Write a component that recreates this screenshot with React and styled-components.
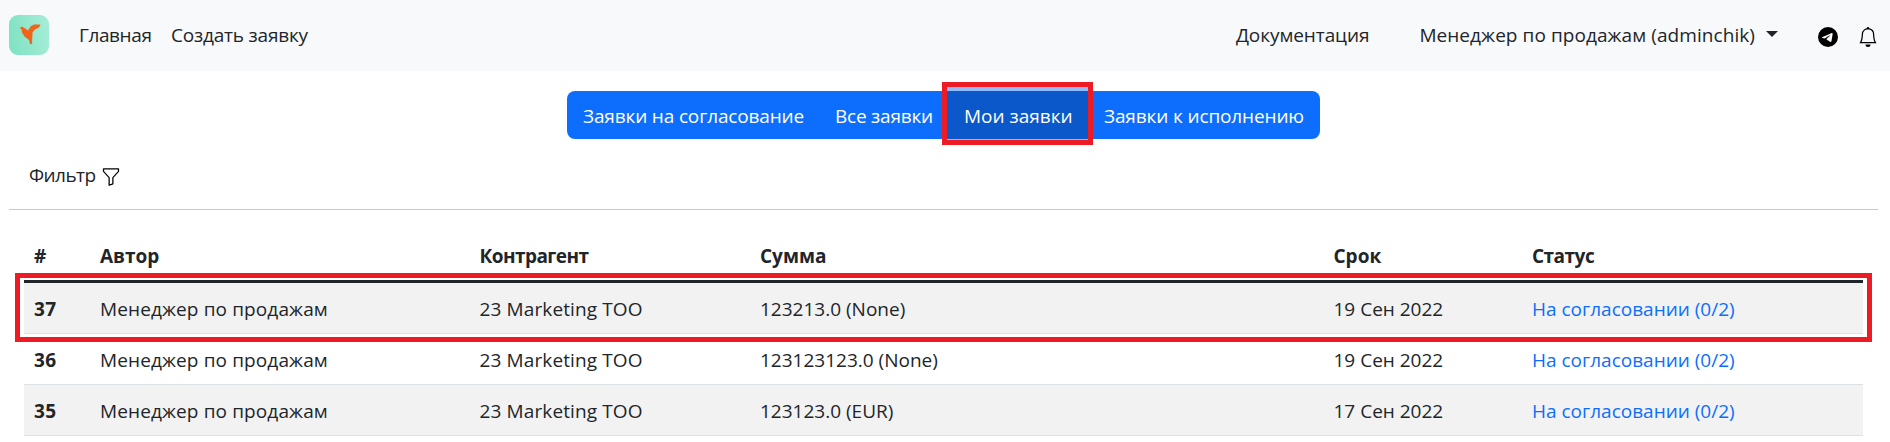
import React from 'react';
import styled, { createGlobalStyle } from 'styled-components';
import { BsBell, BsFunnel, BsTelegram } from 'react-icons/bs';

const GlobalStyle = createGlobalStyle`
  *, *::before, *::after { box-sizing: border-box; }
  body {
    margin: 0;
    background: #fff;
    color: #212529;
    font: 400 19px/30px "Segoe UI", "Open Sans", "Noto Sans", sans-serif;
    overflow: hidden;
  }
`;

const Label = styled.span`
  white-space: nowrap;
  letter-spacing: ${(p) => p.$track || 0}px;
`;

const Navbar = styled.header`
  display: flex;
  align-items: center;
  height: 71px;
  padding: 0 12px 0 9px;
  background: #f8f9fb;
`;

const Logo = styled.svg`
  width: 40px;
  height: 40px;
  margin: 0 30px 2px 0;
`;

const NavLink = styled.a`
  display: flex;
  align-items: center;
  padding-bottom: 2px;
  white-space: nowrap;
  color: #212529;
  margin-right: ${(p) => p.$gap}px;
`;

const Spacer = styled.div`
  flex: 1;
`;

const Caret = styled.span`
  margin: 0 0 1px 11px;
  border: 6px solid transparent;
  border-top-color: #212529;
  border-bottom: 0;
`;

const NavIcon = styled.span`
  display: flex;
  color: #000;
  font-size: 20px;
  margin: 3px 0 0 ${(p) => p.$gap || 0}px;
`;

const Tabs = styled.nav`
  display: flex;
  width: 753px;
  height: 48px;
  margin: 20px 0 0 567px;
`;

const Tab = styled.button`
  position: relative;
  width: ${(p) => p.$width}px;
  padding: 2px 0 0 ${(p) => (p.$active ? 17 : 16)}px;
  border: 0;
  text-align: left;
  font: inherit;
  color: #fff;
  background: ${(p) => (p.$active ? '#0a58ca' : '#0d6efd')};
  box-shadow: ${(p) => (p.$active ? '0 0 0 4px #93bbfa' : 'none')};
  z-index: ${(p) => (p.$active ? 1 : 0)};
  &:first-child { border-radius: 8px 0 0 8px; }
  &:last-child { border-radius: 0 8px 8px 0; }
`;

const TabFrame = styled.span`
  position: absolute;
  inset: -9px -5px -6px -5px;
  border: 5px solid #ed1c24;
`;

const Filter = styled.div`
  display: flex;
  align-items: center;
  height: 30px;
  margin: 21px 0 0 29px;
`;

const FilterIcon = styled(BsFunnel)`
  width: 20px;
  height: 20px;
  margin: 3px 0 0 5px;
  color: #000;
`;

const Divider = styled.hr`
  height: 1px;
  margin: 19px 12px 0 9px;
  border: 0;
  background: #c8c9ca;
`;

const Table = styled.section`
  margin: 30px 27px 0 24px;
`;

const Row = styled.div`
  position: relative;
  display: grid;
  grid-template-columns: 66px 379.5px 280.5px 573.5px 198.5px 1fr;
  align-items: center;
  height: 51px;
  padding-top: 1px;
  background: ${(p) => (p.$striped ? '#f2f2f2' : '#fff')};
  border-bottom: 1px solid #dee2e6;
`;

const HeadRow = styled(Row)`
  height: 43px;
  padding: 0 0 9px;
  border-bottom: 3px solid #212529;
  font-weight: 700;
`;

const Cell = styled.div`
  padding-left: 10px;
  white-space: nowrap;
  font-weight: ${(p) => (p.$bold ? 700 : 'inherit')};
`;

const StatusLink = styled.a`
  color: #0d6efd;
`;

const RowFrame = styled.div`
  position: absolute;
  inset: -10px -9px -9px -9px;
  border: 5px solid #ed1c24;
  z-index: 1;
`;

const tabs = [
  { text: 'Заявки на согласование', width: 252, track: -0.15 },
  { text: 'Все заявки', width: 128, track: -0.22 },
  { text: 'Мои заявки', width: 141, track: 0, active: true },
  { text: 'Заявки к исполнению', width: 232, track: -0.13 },
];

const columns = [
  { text: '#' },
  { text: 'Автор' },
  { text: 'Контрагент', track: -0.55 },
  { text: 'Сумма' },
  { text: 'Срок' },
  { text: 'Статус', track: -0.5 },
];

const requests = [
  { id: 37, sum: '123213.0 (None)', due: '19 Сен 2022', marked: true },
  { id: 36, sum: '123123123.0 (None)', due: '19 Сен 2022' },
  { id: 35, sum: '123123.0 (EUR)', due: '17 Сен 2022' },
];

function BirdLogo() {
  return (
    <Logo viewBox="0 0 40 40">
      <defs>
        <linearGradient id="mint" x1="0" x2="1" y1="0.2" y2="0">
          <stop offset="0" stopColor="#82e3c4" />
          <stop offset="1" stopColor="#a8edd8" />
        </linearGradient>
      </defs>
      <rect width="40" height="40" rx="9" fill="url(#mint)" />
      <path
        fill="#f26419"
        d="M10.5 13.2 L13 11.5 L15.5 13 L19 15.5 L21.5 11.5 L25 9.5 L31.5 9.5 L30 12.5 L26 14.5 L23.5 17.5 L23 29 L21 29 L20 25 L15.5 21.5 L13 17.5 L12.5 14 Z"
      />
    </Logo>
  );
}

export default function App() {
  return (
    <>
      <GlobalStyle />
      <Navbar>
        <BirdLogo />
        <NavLink $gap={19.5}><Label $track={-0.4}>Главная</Label></NavLink>
        <NavLink><Label $track={-0.2}>Создать заявку</Label></NavLink>
        <Spacer />
        <NavLink $gap={50}><Label $track={-0.08}>Документация</Label></NavLink>
        <NavLink $gap={40}>
          <Label $track={0.07}>Менеджер по продажам (adminchik)</Label>
          <Caret />
        </NavLink>
        <NavIcon><BsTelegram /></NavIcon>
        <NavIcon $gap={20}><BsBell /></NavIcon>
      </Navbar>
      <Tabs>
        {tabs.map((t) => (
          <Tab key={t.text} $width={t.width} $active={t.active}>
            <Label $track={t.track}>{t.text}</Label>
            {t.active && <TabFrame />}
          </Tab>
        ))}
      </Tabs>
      <Filter>
        <Label $track={-0.55}>Фильтр</Label>
        <FilterIcon />
      </Filter>
      <Divider />
      <Table>
        <HeadRow>
          {columns.map((c) => (
            <Cell key={c.text}><Label $track={c.track}>{c.text}</Label></Cell>
          ))}
        </HeadRow>
        {requests.map((r, i) => (
          <Row key={r.id} $striped={i % 2 === 0}>
            <Cell $bold><Label $track={0.4}>{r.id}</Label></Cell>
            <Cell><Label $track={0.12}>Менеджер по продажам</Label></Cell>
            <Cell><Label $track={0.12}>23 Marketing ТОО</Label></Cell>
            <Cell><Label>{r.sum}</Label></Cell>
            <Cell><Label>{r.due}</Label></Cell>
            <Cell><StatusLink><Label>На согласовании (0/2)</Label></StatusLink></Cell>
            {r.marked && <RowFrame />}
          </Row>
        ))}
      </Table>
    </>
  );
}
